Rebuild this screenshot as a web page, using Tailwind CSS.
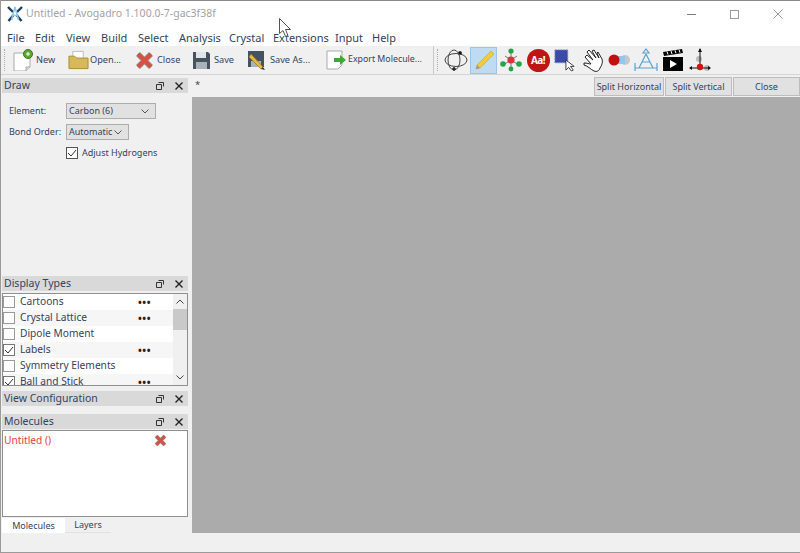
<!doctype html>
<html><head><meta charset="utf-8"><script src="https://cdn.jsdelivr.net/npm/@tailwindcss/browser@4"></script></head>
<body class="m-0">
<div class="w-[800px] h-[553px] overflow-hidden bg-[#f0f0f0] border-l border-b border-[#9a9a9a] flex flex-col font-['Noto_Sans',sans-serif] text-[10.5px] text-[#34425c] relative">
  <!-- title bar -->
  <div class="h-[30px] bg-white border-t border-[#8a8a8a] flex items-center shrink-0 pb-[3px]">
    <svg class="ml-[6px] w-[16px] h-[16px]" viewBox="0 0 16 16"><path d="M1 1l5 5M15 1l-5 5M1.500 15l5-6M14.500 15l-5-6" stroke="#1d3f5e" stroke-width="2.400" fill="none"/><path d="M8 1L4.500 14M8 1l3.500 13M6 9.500h4" stroke="#8cc4e8" stroke-width="1.500" fill="none"/></svg>
    <span class="ml-[3px] text-[10.5px] text-[#a3a3a3]">Untitled - Avogadro 1.100.0-7-gac3f38f</span>
    <div class="ml-auto flex items-center">
      <div class="w-[9px] h-px bg-[#7c7c7c] mr-[34px]"></div>
      <div class="w-[9px] h-[9px] border border-[#9a9a9a] mr-[34px]"></div>
      <svg class="w-[10px] h-[10px] mr-[17px]" viewBox="0 0 10 10"><path d="M.5.5l9 9M9.500.5l-9 9" stroke="#9a9a9a" stroke-width="1"/></svg>
    </div>
  </div>
  <!-- menu -->
  <div class="h-[16px] bg-white flex items-center text-[11px] shrink-0 pl-[6px]">
    <span class="w-[28px]">File</span><span class="w-[31px]">Edit</span><span class="w-[35px]">View</span><span class="w-[37px]">Build</span><span class="w-[41px]">Select</span><span class="w-[50px]">Analysis</span><span class="w-[44px]">Crystal</span><span class="w-[62px]">Extensions</span><span class="w-[37px]">Input</span><span>Help</span>
  </div>
  <!-- toolbar -->
  <div class="h-[29px] bg-[#f0f0f0] border-b border-[#d4d4d4] flex items-center shrink-0 relative text-[9.2px]">
    <div class="w-[1px] h-[22px] ml-[3px] border-l border-dotted border-[#aaa]"></div>
    <div class="flex items-center ml-[8px] gap-[2px] w-[55px]">
      <svg class="w-[21px] h-[22px]" viewBox="0 0 21 22"><path d="M1 4h12l4 3v11l-4 4H1z" fill="#fff" stroke="#aaa"/><path d="M13 22v-4h4" fill="#ddd" stroke="#aaa"/><circle cx="15" cy="5" r="4.500" fill="#5fa82e" stroke="#3d6f1f"/><path d="M13 5h4M15 3v4" stroke="#fff"/></svg>
      <span>New</span>
    </div>
    <div class="flex items-center gap-[1px] w-[67px]">
      <svg class="w-[21px] h-[20px]" viewBox="0 0 22 20"><path d="M5 1h11v8H5z" fill="#fff" stroke="#bbb"/><path d="M1 6h6l2 2h12v11H1z" fill="#d8b95a" stroke="#a88a35"/></svg>
      <span>Open...</span>
    </div>
    <div class="flex items-center gap-[3px] w-[58px]">
      <svg class="w-[19px] h-[19px]" viewBox="0 0 19 19"><path d="M3 3l13 13M16 3L3 16" stroke="#8a8a8a" stroke-width="5.500"/><path d="M3 3l13 13M16 3L3 16" stroke="#d9503f" stroke-width="3.800"/></svg>
      <span>Close</span>
    </div>
    <div class="flex items-center gap-[4px] w-[55px]">
      <svg class="w-[17px] h-[17px]" viewBox="0 0 17 17"><path d="M0 0h15l2 2v15H0z" fill="#46535e"/><path d="M3 0h10v6H3z" fill="#dfe5e8"/><path d="M3 10h11v7H3z" fill="#a8b2b8"/></svg>
      <span>Save</span>
    </div>
    <div class="flex items-center gap-[3px] w-[78px]">
      <svg class="w-[19px] h-[20px]" viewBox="0 0 19 20"><path d="M0 1h16v16H0z" fill="#46535e"/><path d="M3 11h10v6H3z" fill="#a8b2b8"/><path d="M3 4l12 13-2 2L1 7z" fill="#e9b93e" stroke="#8a6d20" stroke-width=".6"/><path d="M13 19l4 1-2-3z" fill="#333"/></svg>
      <span>Save As...</span>
    </div>
    <div class="flex items-center gap-[1px] w-[107px]">
      <svg class="w-[21px] h-[20px]" viewBox="0 0 21 20"><path d="M1 1h15v14l-4 4H1z" fill="#fff" stroke="#aaa"/><path d="M8 8h6V5l6 5-6 5v-3H8z" fill="#3fa838"/></svg>
      <span class="text-[8.8px]">Export Molecule...</span>
    </div>
    <div class="w-px h-[28px] bg-[#c9c9c9]"></div>
    <div class="w-[1px] h-[22px] ml-[3px] border-l border-dotted border-[#aaa]"></div>
    <div class="flex items-center ml-[5px] gap-[1px]">
      <div class="w-[26px] h-[26px] flex items-center justify-center">
        <svg class="w-[24px] h-[24px]" viewBox="0 0 24 24" fill="none" stroke="#444"><ellipse cx="12" cy="12" rx="11" ry="6.500"/><ellipse cx="10" cy="12" rx="6" ry="10"/><circle cx="16" cy="5" r="1.600" fill="#111"/><circle cx="10" cy="21" r="1.400" fill="#111"/></svg>
      </div>
      <div class="w-[27px] h-[27px] bg-[#bfdbf2] border border-[#9cc4e6] flex items-center justify-center">
        <svg class="w-[22px] h-[22px]" viewBox="0 0 22 22"><path d="M18 2l3 3L7 19l-4 1 1-4z" fill="#eecb3f" stroke="#c9a52c" stroke-width=".6"/><path d="M3 20l1-4 3 3z" fill="#999"/></svg>
      </div>
      <div class="w-[26px] h-[26px] flex items-center justify-center">
        <svg class="w-[22px] h-[24px]" viewBox="0 0 22 24"><path d="M11 12V3M11 12L3 17M11 12l8 5M11 12l-6-4M11 12l6-4M11 12v9" stroke="#777" stroke-width="1"/><circle cx="11" cy="3" r="2.600" fill="#22a447"/><circle cx="3" cy="16" r="2.800" fill="#22a447"/><circle cx="19" cy="16" r="2.800" fill="#22a447"/><circle cx="11" cy="21" r="2.400" fill="#22a447"/><circle cx="11" cy="12" r="3.600" fill="#d8343f"/></svg>
      </div>
      <div class="w-[26px] h-[26px] flex items-center justify-center">
        <div class="w-[23px] h-[23px] rounded-full bg-[#bf1515] text-white font-bold text-[10px] flex items-center justify-center tracking-tighter">Aa!</div>
      </div>
      <div class="w-[26px] h-[26px] flex items-center justify-center">
        <svg class="w-[22px] h-[24px]" viewBox="0 0 24 24"><rect x="1" y="1" width="14" height="14" fill="#3b4aa8" stroke="#7f88c8" stroke-dasharray="2 1"/><path d="M13 12v11l3-3 3 4 2-1-3-4h4z" fill="#fff" stroke="#333"/></svg>
      </div>
      <div class="w-[26px] h-[26px] flex items-center justify-center">
        <svg class="w-[24px] h-[24px]" viewBox="0 0 24 24" fill="#fff" stroke="#222" stroke-width="1"><path d="M20 20c2-3 3-6 2-9l-4-7-1 1 2 5-5-8-2 1 4 7-7-8-2 2 6 8-6-5-2 2 6 7c-2 0-4-1-7-1l0 2c4 1 6 4 10 6 3 1 5 0 6-3z"/></svg>
      </div>
      <div class="w-[26px] h-[26px] flex items-center justify-center">
        <svg class="w-[24px] h-[14px]" viewBox="0 0 24 14"><circle cx="18" cy="7" r="5" fill="#c4c8cc"/><path d="M9 3h9v8H9z" fill="#8ccaf2"/><circle cx="7" cy="7" r="5.500" fill="#c40f0f"/></svg>
      </div>
      <div class="w-[26px] h-[26px] flex items-center justify-center">
        <svg class="w-[24px] h-[24px]" viewBox="0 0 24 24" fill="none" stroke="#5aa2cf" stroke-width="1.200"><path d="M12 6l-7 14M12 6l7 14M8 14h8M12 1l-3 4h6zM1 15v8M23 15v8M1 20h22"/></svg>
      </div>
      <div class="w-[26px] h-[26px] flex items-center justify-center">
        <svg class="w-[22px] h-[24px]" viewBox="0 0 22 24"><rect x="1" y="9" width="20" height="14" fill="#000"/><path d="M1 4l19-3 1 4L2 8z" fill="#000"/><path d="M5 3.500l1 3M9 3l1 3M13 2.300l1 3M17 1.700l1 3" stroke="#fff"/><path d="M8 12l7 4-7 4z" fill="#fff"/></svg>
      </div>
      <div class="w-[26px] h-[26px] flex items-center justify-center">
        <svg class="w-[24px] h-[24px]" viewBox="0 0 24 24"><circle cx="11" cy="11" r="3" fill="#bbb"/><circle cx="19" cy="20" r="3" fill="#bbb"/><path d="M12 1v19M2 20h20" stroke="#111" stroke-width="1"/><path d="M12 0l-2 4h4zM1 20l3-2v4zM23 20l-3-2v4z" fill="#111"/><circle cx="12" cy="19" r="3.200" fill="#c81818"/></svg>
      </div>
    </div>
  </div>
  <!-- body -->
  <div class="flex-1 flex min-h-0">
    <!-- left docks -->
    <div class="w-[191px] shrink-0 flex flex-col pr-[4px] pt-[3px]">
      <div class="h-[15px] bg-[#d9d9d9] ml-[1px] flex items-center pl-[2px] text-[10.5px] justify-between"><span>Draw</span><span class="flex items-center gap-[11px] pr-[5px]"><svg class="w-[8px] h-[8px]" viewBox="0 0 8 8" fill="none" stroke="#333"><path d="M2.500.5h5v4M.5 2.500h5v5h-5z"/></svg><svg class="w-[8px] h-[8px]" viewBox="0 0 8 8"><path d="M.5.5l7 7M7.500.5l-7 7" stroke="#222" stroke-width="1.400"/></svg></span></div>
      <div class="h-[183px] pl-[8px] pt-[10px] text-[9px]">
        <div class="flex items-center h-[16px]"><span class="w-[57px]">Element:</span><div class="w-[90px] h-[16px] bg-[#e1e1e1] border border-[#adadad] pl-[2px] pr-[6px] flex items-center justify-between"><span>Carbon (6)</span><svg class="w-[8px] h-[5px]" viewBox="0 0 8 5" fill="none" stroke="#555"><path d="M.5.500l3.500 3.500 3.500-3.500"/></svg></div></div>
        <div class="flex items-center h-[16px] mt-[5px]"><span class="w-[57px] whitespace-nowrap">Bond Order:</span><div class="w-[63px] h-[16px] bg-[#e1e1e1] border border-[#adadad] pl-[2px] pr-[6px] flex items-center justify-between"><span>Automatic</span><svg class="w-[8px] h-[5px]" viewBox="0 0 8 5" fill="none" stroke="#555"><path d="M.5.500l3.500 3.500 3.500-3.500"/></svg></div></div>
        <div class="flex items-center ml-[57px] mt-[7px] h-[12px] gap-[4px]"><div class="w-[12px] h-[12px] border border-[#555] bg-white flex items-center justify-center"><svg class="w-[10px] h-[10px]" viewBox="0 0 10 10" fill="none" stroke="#333"><path d="M1 5l3 3 5-6"/></svg></div><span>Adjust Hydrogens</span></div>
      </div>
      <div class="h-[15px] bg-[#d9d9d9] ml-[1px] flex items-center pl-[2px] text-[10.5px] justify-between"><span>Display Types</span><span class="flex items-center gap-[11px] pr-[5px]"><svg class="w-[8px] h-[8px]" viewBox="0 0 8 8" fill="none" stroke="#333"><path d="M2.500.5h5v4M.5 2.500h5v5h-5z"/></svg><svg class="w-[8px] h-[8px]" viewBox="0 0 8 8"><path d="M.5.5l7 7M7.500.5l-7 7" stroke="#222" stroke-width="1.400"/></svg></span></div>
      <div class="h-[93px] mt-[2px] ml-[1px] border border-[#8f8f8f] bg-white flex overflow-hidden text-[10.2px]">
        <div class="flex-1 min-w-0">
          <div class="h-[16px] flex items-center"><span class="w-[12px] h-[12px] border border-[#9a9a9a] bg-white mr-[5px]"></span><span class="w-[118px]">Cartoons</span><span class="font-bold text-[#222] tracking-[.5px] leading-none">•••</span></div>
          <div class="h-[16px] flex items-center bg-[#f6f6f6]"><span class="w-[12px] h-[12px] border border-[#9a9a9a] bg-white mr-[5px]"></span><span class="w-[118px]">Crystal Lattice</span><span class="font-bold text-[#222] tracking-[.5px] leading-none">•••</span></div>
          <div class="h-[16px] flex items-center"><span class="w-[12px] h-[12px] border border-[#9a9a9a] bg-white mr-[5px]"></span><span>Dipole Moment</span></div>
          <div class="h-[16px] flex items-center bg-[#f6f6f6]"><span class="w-[12px] h-[12px] border border-[#777] bg-white mr-[5px] flex items-center justify-center"><svg class="w-[10px] h-[10px]" viewBox="0 0 10 10" fill="none" stroke="#333"><path d="M1 5l3 3 5-6"/></svg></span><span class="w-[118px]">Labels</span><span class="font-bold text-[#222] tracking-[.5px] leading-none">•••</span></div>
          <div class="h-[16px] flex items-center"><span class="w-[12px] h-[12px] border border-[#9a9a9a] bg-white mr-[5px]"></span><span>Symmetry Elements</span></div>
          <div class="h-[16px] flex items-center bg-[#f6f6f6]"><span class="w-[12px] h-[12px] border border-[#777] bg-white mr-[5px] flex items-center justify-center"><svg class="w-[10px] h-[10px]" viewBox="0 0 10 10" fill="none" stroke="#333"><path d="M1 5l3 3 5-6"/></svg></span><span class="w-[118px]">Ball and Stick</span><span class="font-bold text-[#222] tracking-[.5px] leading-none">•••</span></div>
        </div>
        <div class="w-[14px] bg-[#f0f0f0] flex flex-col items-center shrink-0">
          <svg class="w-[8px] h-[5px] mt-[5px]" viewBox="0 0 8 5" fill="none" stroke="#444"><path d="M.5 4.500l3.500-3.500 3.500 3.500"/></svg>
          <div class="w-full h-[21px] bg-[#c9c9c9] mt-[5px]"></div>
          <svg class="w-[8px] h-[5px] mt-auto mb-[5px]" viewBox="0 0 8 5" fill="none" stroke="#444"><path d="M.5.500l3.500 3.500 3.500-3.500"/></svg>
        </div>
      </div>
      <div class="h-[15px] bg-[#d9d9d9] ml-[1px] mt-[5px] flex items-center pl-[2px] text-[10.5px] justify-between"><span>View Configuration</span><span class="flex items-center gap-[11px] pr-[5px]"><svg class="w-[8px] h-[8px]" viewBox="0 0 8 8" fill="none" stroke="#333"><path d="M2.500.5h5v4M.5 2.500h5v5h-5z"/></svg><svg class="w-[8px] h-[8px]" viewBox="0 0 8 8"><path d="M.5.5l7 7M7.500.5l-7 7" stroke="#222" stroke-width="1.400"/></svg></span></div>
      <div class="h-[15px] bg-[#d9d9d9] ml-[1px] mt-[8px] flex items-center pl-[2px] text-[10.5px] justify-between"><span>Molecules</span><span class="flex items-center gap-[11px] pr-[5px]"><svg class="w-[8px] h-[8px]" viewBox="0 0 8 8" fill="none" stroke="#333"><path d="M2.500.5h5v4M.5 2.500h5v5h-5z"/></svg><svg class="w-[8px] h-[8px]" viewBox="0 0 8 8"><path d="M.5.5l7 7M7.500.5l-7 7" stroke="#222" stroke-width="1.400"/></svg></span></div>
      <div class="h-[87px] mt-[1px] ml-[1px] border border-[#8f8f8f] bg-white flex items-start justify-between pl-[1px] pr-[20px] pt-[2px]">
        <span class="text-[#e0403f] text-[10.2px]">Untitled ()</span>
        <svg class="w-[13px] h-[13px] mt-[1px]" viewBox="0 0 12 12"><path d="M2 2l8 8M10 2l-8 8" stroke="#8a8a8a" stroke-width="3.600"/><path d="M2 2l8 8M10 2l-8 8" stroke="#d9503f" stroke-width="2.400"/></svg>
      </div>
      <div class="flex h-[16px] text-[9px] pl-[1px] pt-[1px]">
        <div class="w-[63px] bg-white flex items-center justify-center">Molecules</div>
        <div class="w-[46px] bg-[#f0f0f0] border-b border-[#e2e2e2] flex items-center justify-center">Layers</div>
      </div>
    </div>
    <!-- central -->
    <div class="flex-1 flex flex-col min-w-0">
      <div class="h-[22px] flex items-start shrink-0 text-[9.5px] pt-[2px]">
        <span class="ml-[3px] mt-[1px]">*</span>
        <div class="ml-auto flex gap-[1px] h-[19px]">
          <div class="w-[70px] bg-[#e1e1e1] border border-[#bdbdbd] flex items-center justify-center text-[9px] whitespace-nowrap">Split Horizontal</div>
          <div class="w-[67px] bg-[#e1e1e1] border border-[#bdbdbd] flex items-center justify-center text-[9px] whitespace-nowrap">Split Vertical</div>
          <div class="w-[67px] bg-[#e1e1e1] border border-[#bdbdbd] flex items-center justify-center text-[9px]">Close</div>
        </div>
      </div>
      <div class="flex-1 bg-[#ababab]"></div>
    </div>
  </div>
  <div class="h-[19px] bg-[#f0f0f0] shrink-0"></div>
  <!-- mouse cursor overlay -->
  <svg class="absolute left-[278px] top-[18px] w-[12px] h-[19px]" viewBox="0 0 12 19"><path d="M.5.500v15l3.500-3 2.500 6 2.500-1-2.500-6h5z" fill="#fff" stroke="#555"/></svg>
</div>
</body></html>
